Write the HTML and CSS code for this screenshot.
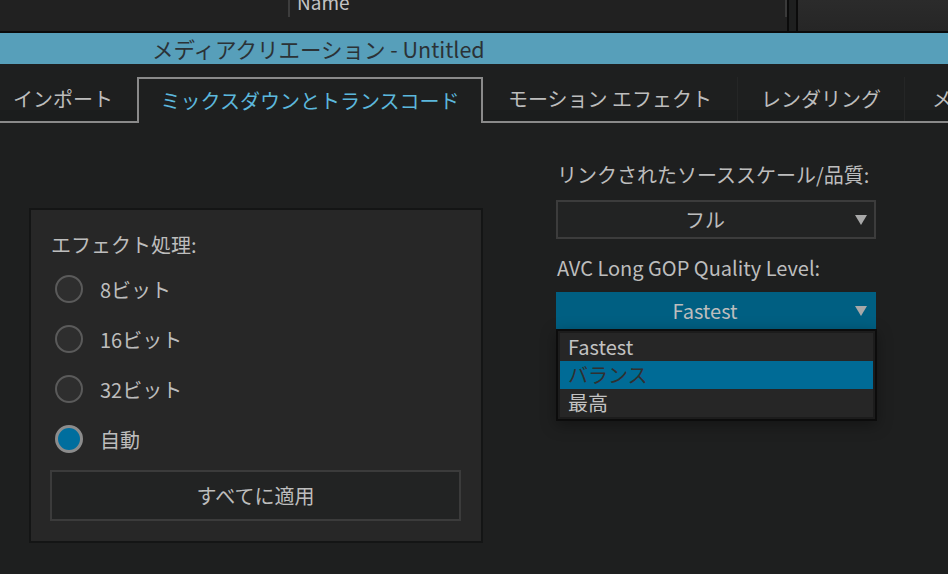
FILE: index.html
```html
<!DOCTYPE html>
<html lang="ja">
<head>
  <meta charset="UTF-8" />
  <title>メディアクリエーション - Untitled</title>
  <link rel="stylesheet" href="styles.css">
</head>
<body>
  <div class="project-panel">
    <div class="project-list">
      <div class="name-column"><span>Name</span></div>
      <div class="end-column"></div>
    </div>
    <div class="project-side"></div>
  </div>

  <div class="title-bar">メディアクリエーション - Untitled</div>

  <div class="tabs">
    <div class="tab tab-import">インポート</div>
    <div class="tab tab-mixdown active">ミックスダウンとトランスコード</div>
    <div class="tab tab-motion">モーション エフェクト</div>
    <div class="tab tab-render">レンダリング</div>
    <div class="tab tab-more">メ</div>
  </div>

  <div class="content">
    <div class="effect-box">
      <div class="field-label">エフェクト処理:</div>
      <div class="radio-row"><span class="radio"></span>8ビット</div>
      <div class="radio-row"><span class="radio"></span>16ビット</div>
      <div class="radio-row"><span class="radio"></span>32ビット</div>
      <div class="radio-row"><span class="radio checked"></span>自動</div>
      <button class="apply-btn">すべてに適用</button>
    </div>

    <div class="quality-column">
      <div class="field-label">リンクされたソーススケール/品質:</div>
      <div class="dropdown">
        <span class="value">フル</span>
        <svg class="arrow" width="12" height="10" viewBox="0 0 12 10"><polygon points="0,0 12,0 6,10" fill="#a8a8a8"/></svg>
      </div>

      <div class="field-label second">AVC Long GOP Quality Level:</div>
      <div class="dropdown open">
        <span class="value">Fastest</span>
        <svg class="arrow" width="12" height="10" viewBox="0 0 12 10"><polygon points="0,0 12,0 6,10" fill="#a8a8a8"/></svg>
      </div>
      <div class="popup">
        <div class="popup-item">Fastest</div>
        <div class="popup-item selected">バランス</div>
        <div class="popup-item">最高</div>
      </div>
    </div>
  </div>
</body>
</html>
```

FILE: styles.css
```css
body {
  margin: 0;
  width: 948px;
  height: 574px;
  overflow: hidden;
  background: #1e1f1f;
  color: #bdbdbd;
  font-family: "Noto Sans CJK JP", "Noto Sans", sans-serif;
  font-size: 20px;
}

/* project panel behind the dialog */
.project-panel {
  display: flex;
  height: 31px;
  border-bottom: 2px solid #0b0b0b;
}

.project-list {
  width: 787px;
  display: flex;
  background: #212121;
  border-right: 2px solid #0b0b0b;
}

.name-column {
  margin-left: 288px;
  width: 492px;
  height: 17px;
  border-left: 2px solid #3d3d3d;
  padding-left: 7px;
}

.name-column span {
  display: block;
  margin-top: -10px;
  line-height: 24px;
  font-size: 19px;
  color: #c4c4c4;
}

.end-column {
  width: 2px;
  height: 17px;
  background: #3a3a3a;
}

.project-side {
  flex: 1;
  margin-left: 7px;
  border-left: 2px solid #0b0b0b;
  background: linear-gradient(180deg, #2b2b2b, #262626);
}

.title-bar {
  height: 31px;
  line-height: 31px;
  background: #579fba;
  color: #2b3236;
  padding-left: 152px;
  font-size: 21.5px;
}

/* tabs */
.tabs {
  display: flex;
  align-items: flex-end;
  height: 57px;
  background: linear-gradient(180deg, #1e1f1f 0, #1e1f1f 46px, #1b1d1d 46px);
  border-bottom: 2px solid #8a8a8a;
  white-space: nowrap;
}

.tab {
  flex-shrink: 0;
  box-sizing: border-box;
  height: 44px;
  line-height: 44px;
  text-align: center;
  color: #bdbdbd;
  border-right: 1px solid #252626;
}

.tab-import {
  width: 137px;
  padding-left: 13px;
  text-align: left;
  border-right: none;
}

.tab-mixdown {
  width: 346px;
}

.tab-motion {
  width: 255px;
}

.tab-render {
  width: 167px;
}

.tab-more {
  width: 60px;
  padding-left: 27px;
  text-align: left;
  border-right: none;
}

.tab.active {
  height: 46px;
  margin-bottom: -2px;
  padding-bottom: 2px;
  border: 2px solid #8a8a8a;
  border-bottom: none;
  background: #1e1f1f;
  color: #5cb7dc;
}

/* content */
.content {
  display: flex;
  padding-left: 29px;
}

.effect-box {
  width: 450px;
  margin-top: 85px;
  padding: 20px 0 20px;
  background: #272727;
  border: 2px solid #141515;
  display: flex;
  flex-direction: column;
}

.field-label {
  line-height: 30px;
  padding-left: 20px;
  white-space: nowrap;
}

.effect-box .field-label {
  margin-bottom: 4px;
}

.radio-row {
  height: 50px;
  display: flex;
  align-items: center;
  padding-left: 24px;
}

.radio {
  width: 24px;
  height: 24px;
  margin-right: 17px;
  border-radius: 50%;
  border: 2px solid #5a5a5a;
  background: #2e2e2e;
}

.radio.checked {
  width: 22px;
  height: 22px;
  border: 3px solid #8c8c8c;
  background: #006e9e;
}

.apply-btn {
  margin: 6px 20px 0 19px;
  height: 51px;
  background: #222323;
  border: 2px solid #3b3b3b;
  color: #bdbdbd;
  font-family: inherit;
  font-size: 20px;
}

.quality-column {
  width: 321px;
  margin-left: 73px;
  padding-top: 37px;
}

.quality-column .field-label {
  padding-left: 1px;
  margin-bottom: 10px;
}

.quality-column .field-label.second {
  margin-top: 14px;
  margin-bottom: 9px;
}

.dropdown {
  width: 320px;
  height: 39px;
  box-sizing: border-box;
  display: flex;
  align-items: center;
  background: #222323;
  border: 2px solid #3c3c3c;
}

.dropdown .value {
  flex: 1;
  text-align: center;
}

.dropdown .arrow {
  margin: 0 7px 0 3px;
}

.dropdown.open {
  height: 37px;
  background: #005f82;
  border: none;
  padding: 0 2px;
}

.popup {
  width: 321px;
  box-sizing: border-box;
  border: 2px solid #0c0c0c;
  padding: 2px;
  background: #1c1c1c;
  box-shadow: 0 4px 14px rgba(0, 0, 0, 0.35);
}

.popup-item {
  height: 28px;
  line-height: 28px;
  padding-left: 8px;
  background: #262626;
  color: #c2c2c2;
}

.popup-item.selected {
  background: #006b96;
  color: #303030;
}
```
